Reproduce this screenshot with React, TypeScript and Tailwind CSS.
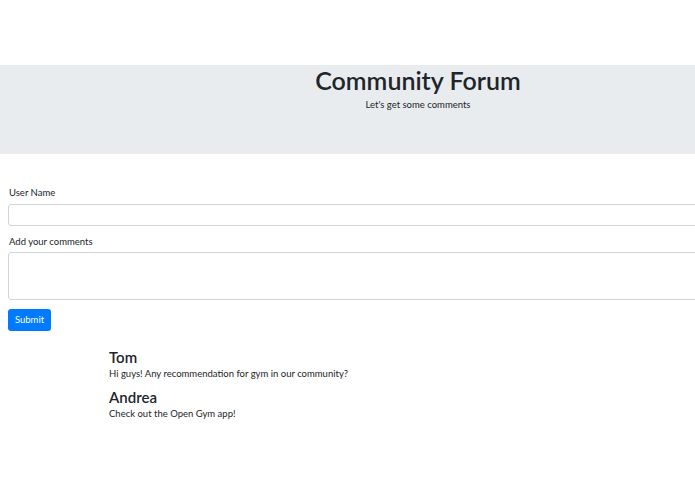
export default function App() {
  const comments = [
    { name: 'Tom', text: 'Hi guys! Any recommendation for gym in our community?' },
    { name: 'Andrea', text: 'Check out the Open Gym app!' },
  ];
  return (
    <div className="min-h-[494px] w-[695px] overflow-hidden bg-white text-[#212529]" style={{ fontFamily: 'Lato, "Liberation Sans", sans-serif' }}>
      <div className="h-[65px]" />
      <div className="h-[89px] bg-[#e9ecef] pl-[141px] pt-[1px] flex flex-col items-center">
        <h1 className="text-[25px] leading-[28px] font-semibold">Community Forum</h1>
        <p className="mt-[5px] text-[9.5px] leading-[12px]">Let's get some comments</p>
      </div>
      <div className="pl-[8px] pt-[33px]">
        <label className="block pl-[1px] text-[9.5px] leading-[12px]">User Name</label>
        <div className="mt-[5px] h-[22px] w-[700px] rounded-[3px] border border-[#ced4da]" />
        <label className="mt-[10px] block pl-[1px] text-[9.5px] leading-[12px]">Add your comments</label>
        <div className="mt-[4px] h-[48px] w-[700px] rounded-[3px] border border-[#ced4da]" />
        <button className="mt-[9px] h-[22px] w-[43px] rounded-[3px] bg-[#007bff] text-[9.5px] text-white">Submit</button>
      </div>
      <div className="pl-[109px] pt-[17px]">
        {comments.map((c) => (
          <div key={c.name} className="mb-[8px]">
            <h4 className="text-[15px] leading-[18px] font-semibold">{c.name}</h4>
            <p className="mt-[2px] text-[9.5px] leading-[12px]">{c.text}</p>
          </div>
        ))}
      </div>
    </div>
  );
}
